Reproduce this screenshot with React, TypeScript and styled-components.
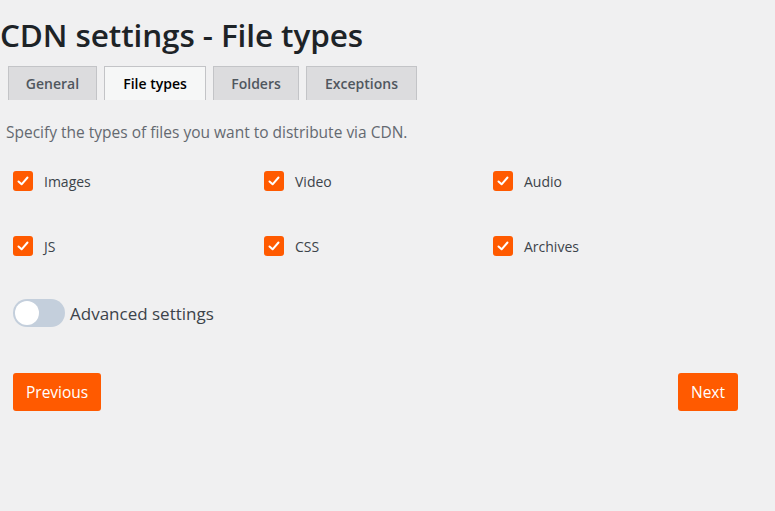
import React from 'react';
import styled, { createGlobalStyle } from 'styled-components';

const GlobalStyle = createGlobalStyle`
  html, body {
    margin: 0;
    padding: 0;
    background: #f0f0f1;
    font-family: "Open Sans", "Noto Sans", sans-serif;
    color: #3c434a;
  }
`;

const Page = styled.div`
  width: 775px;
  height: 511px;
  box-sizing: border-box;
  padding-top: 14px;
`;

const Title = styled.h1`
  margin: 0;
  font-size: 31.5px;
  font-weight: 600;
  line-height: 42px;
  color: #1d2327;
  letter-spacing: -0.1px;
`;

const TabBar = styled.div`
  display: flex;
  gap: 7px;
  margin: 10px 0 0 8px;
`;

const Tab = styled.div<{ $active?: boolean; $width: number }>`
  box-sizing: border-box;
  height: 34px;
  width: ${p => p.$width}px;
  display: flex;
  align-items: center;
  justify-content: center;
  font-size: 14px;
  font-weight: 600;
  border: 1px solid #c3c4c7;
  border-bottom: none;
  background: ${p => (p.$active ? '#f6f7f7' : '#dcdcde')};
  color: ${p => (p.$active ? '#000' : '#50575e')};
`;

const Description = styled.p`
  margin: 21px 0 0 6px;
  font-size: 15.5px;
  color: #646970;
`;

const Grid = styled.div`
  display: grid;
  grid-template-columns: 251px 229px 1fr;
  row-gap: 45px;
  margin: 28px 0 0 13px;
`;

const Option = styled.label`
  display: flex;
  align-items: center;
  gap: 11px;
  font-size: 14px;
  color: #3c434a;
  height: 20px;
`;

const Box = styled.span`
  width: 20px;
  height: 20px;
  border-radius: 3px;
  background: #ff5a00;
  display: flex;
  align-items: center;
  justify-content: center;
`;

const ToggleRow = styled.div`
  display: flex;
  align-items: center;
  gap: 5px;
  margin: 43px 0 0 13px;
  font-size: 17px;
  color: #3c434a;
`;

const Track = styled.span`
  position: relative;
  width: 52px;
  height: 28px;
  border-radius: 14px;
  background: #c4cfdc;
`;

const Knob = styled.span`
  position: absolute;
  left: 2px;
  top: 2px;
  width: 24px;
  height: 24px;
  border-radius: 50%;
  background: #fff;
`;

const Actions = styled.div`
  display: flex;
  justify-content: space-between;
  width: 725px;
  margin: 46px 0 0 13px;
`;

const Button = styled.button`
  height: 38px;
  padding: 0 13px;
  border: none;
  border-radius: 3px;
  background: #ff5a00;
  color: #fff;
  font-family: inherit;
  font-size: 15.5px;
`;

const Check = () => (
  <Box>
    <svg width="14" height="14" viewBox="0 0 14 14">
      <path d="M2.5 7.5 L5.6 10.3 L11.5 3.5" fill="none" stroke="#fff" strokeWidth="2" strokeLinecap="round" strokeLinejoin="round" />
    </svg>
  </Box>
);

const tabs = [
  { name: 'General', w: 89 },
  { name: 'File types', w: 102, active: true },
  { name: 'Folders', w: 86 },
  { name: 'Exceptions', w: 111 },
];

const types = ['Images', 'Video', 'Audio', 'JS', 'CSS', 'Archives'];

export default function App() {
  return (
    <>
      <GlobalStyle />
      <Page>
        <Title>CDN settings - File types</Title>
        <TabBar>
          {tabs.map(t => (
            <Tab key={t.name} $active={t.active} $width={t.w}>{t.name}</Tab>
          ))}
        </TabBar>
        <Description>Specify the types of files you want to distribute via CDN.</Description>
        <Grid>
          {types.map(t => (
            <Option key={t}>
              <Check />
              {t}
            </Option>
          ))}
        </Grid>
        <ToggleRow>
          <Track><Knob /></Track>
          Advanced settings
        </ToggleRow>
        <Actions>
          <Button>Previous</Button>
          <Button>Next</Button>
        </Actions>
      </Page>
    </>
  );
}
